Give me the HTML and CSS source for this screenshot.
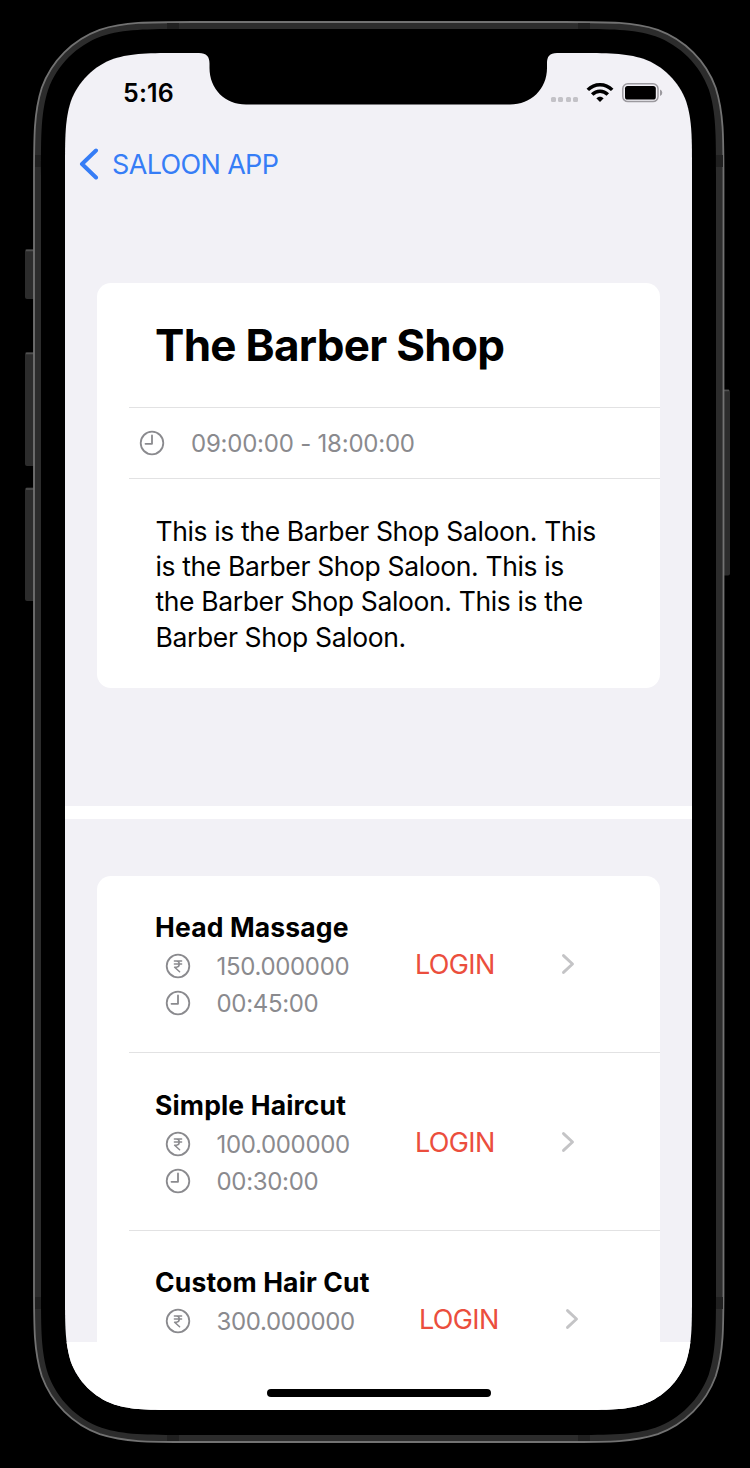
FILE: index.html
```html
<!DOCTYPE html>
<html lang="en">
<head>
<meta charset="utf-8">
<title>Saloon App</title>
<link rel="stylesheet" href="styles.css">
</head>
<body>
<svg width="0" height="0" class="defs">
  <symbol id="clock" viewBox="0 0 26 26"><g fill="none" stroke="#8a8a8e" stroke-width="1.8" stroke-linecap="round" stroke-linejoin="round"><circle cx="13" cy="13" r="11.3"/><path d="M13 5.5V13.8H6.5"/></g></symbol>
  <symbol id="rupee" viewBox="0 0 26 26"><g fill="none" stroke="#8a8a8e" stroke-linecap="round" stroke-linejoin="round"><circle cx="13" cy="13" r="11.3" stroke-width="1.8"/><path stroke-width="1.5" d="M9.4 8H16.6M9.4 11.1H16.6M9.6 8H11.4C15.2 8 15.2 14.2 11.4 14.2H9.6L14.6 18.8"/></g></symbol>
  <symbol id="chevron" viewBox="0 0 14 22"><path d="M2.5 2.6L11.5 11L2.5 19.4" fill="none" stroke="#c4c4c6" stroke-width="2.9" stroke-linecap="round" stroke-linejoin="round"/></symbol>
</svg>
<div class="stage">
  <svg class="device" width="750" height="1468" viewBox="0 0 750 1468">
    <g fill="#2c2c2c">
      <rect x="25" y="249" width="12" height="50" rx="2"/>
      <rect x="25" y="352" width="12" height="114" rx="2"/>
      <rect x="25" y="487.5" width="12" height="113.5" rx="2"/>
      <rect x="720" y="389.5" width="10" height="186" rx="2"/>
    </g>
    <path d="M26 250.5H34M26 353.5H34M26 489H34M724 390.5H729" stroke="#505050" stroke-width="1.5"/>
    <path transform="translate(34 22)" fill="#2c2c2c" stroke="#727272" stroke-width="1.8" d="M0 159c0-45.8 0-68.7 7.8-93.3c9.8-26.9 31-48.1 57.9-57.9c24.6-7.8 47.5-7.8 93.3-7.8H530.5c45.8 0 68.7 0 93.3 7.8c26.9 9.8 48.1 31 57.9 57.9c7.8 24.6 7.8 47.5 7.8 93.3V1261c0 45.8 0 68.7-7.8 93.3c-9.8 26.9-31 48.1-57.9 57.9c-24.6 7.8-47.5 7.8-93.3 7.8H159c-45.8 0-68.7 0-93.3-7.8c-26.9-9.8-48.1-31-57.9-57.9c-7.8-24.6-7.8-47.5-7.8-93.3Z"/>
    <path fill="#202020" d="M167 23h12v7h-12zM578 23h12v7h-12zM167 1434h12v7h-12zM578 1434h12v7h-12zM35 155h7v12h-7zM716 155h7v12h-7zM35 1297h7v12h-7zM716 1297h7v12h-7z"/>
    <path transform="translate(41 29)" fill="#000" d="M0 146.8c0-42.3 0-63.4 7.2-86.2c9-24.8 28.6-44.4 53.4-53.4c22.8-7.2 43.9-7.2 86.2-7.2H528.2c42.3 0 63.4 0 86.2 7.2c24.8 9 44.4 28.6 53.4 53.4c7.2 22.8 7.2 43.9 7.2 86.2V1259.2c0 42.3 0 63.4-7.2 86.2c-9 24.8-28.6 44.4-53.4 53.4c-22.8 7.2-43.9 7.2-86.2 7.2H146.8c-42.3 0-63.4 0-86.2-7.2c-24.8-9-44.4-28.6-53.4-53.4c-7.2-22.8-7.2-43.9-7.2-86.2Z"/>
  </svg>
  <main class="screen">
    <header class="status">
      <span class="time">5:16</span>
      <div class="indicators">
        <span class="dots"><i></i><i></i><i></i><i></i></span>
        <svg width="28" height="22" viewBox="0 0 28 22"><g fill="none" stroke="#000" stroke-width="3.5"><path d="M1.8 7.9C8.5 0.9 19.5 0.9 26.2 7.9"/><path d="M6.2 12.5C10.5 8.1 17.5 8.1 21.8 12.5"/></g><path d="M10.3 16.3C12.3 14.2 15.7 14.2 17.7 16.3L14 20Z"/></svg>
        <svg class="battery" width="41" height="20" viewBox="0 0 41 20"><rect x="0.8" y="0.8" width="35.2" height="17.8" rx="5" fill="none" stroke="#9c9a9f" stroke-width="1.5"/><rect x="3" y="3" width="30.8" height="13.5" rx="2.6"/><path d="M38 6.5Q40.3 7.4 40.3 9.7T38 12.9Z" fill="#9c9a9f"/></svg>
      </div>
    </header>
    <svg class="notch" width="358" height="53" viewBox="0 0 358 53"><path d="M0 0C7.5 0 10.5 3.5 10.5 10.5V15C10.5 36 26 51.5 47 51.5H311C332 51.5 348 36 348 15V10.5C348 3.5 350.5 0 358 0Z"/></svg>
    <nav class="nav">
      <svg width="20" height="32" viewBox="0 0 20 32"><path d="M17 2.5L3 16L17 29.5" fill="none" stroke="#367df6" stroke-width="4" stroke-linecap="round" stroke-linejoin="round"/></svg>
      <span class="back">SALOON APP</span>
    </nav>
    <section class="card info">
      <h1 class="title">The Barber Shop</h1>
      <div class="hours"><svg width="26" height="26"><use href="#clock"/></svg><span class="meta">09:00:00 - 18:00:00</span></div>
      <p class="about">This is the Barber Shop Saloon. This<br>is the Barber Shop Saloon. This is<br>the Barber Shop Saloon. This is the<br>Barber Shop Saloon.</p>
    </section>
    <section class="services">
      <div class="card list">
        <article class="item">
          <div class="details"><h2 class="name">Head Massage</h2>
            <div class="line"><svg width="26" height="26"><use href="#rupee"/></svg><span class="meta">150.000000</span></div>
            <div class="line"><svg width="26" height="26"><use href="#clock"/></svg><span class="meta">00:45:00</span></div></div>
          <span class="login">LOGIN</span><svg class="chevron" width="14" height="22"><use href="#chevron"/></svg>
        </article>
        <article class="item">
          <div class="details"><h2 class="name">Simple Haircut</h2>
            <div class="line"><svg width="26" height="26"><use href="#rupee"/></svg><span class="meta">100.000000</span></div>
            <div class="line"><svg width="26" height="26"><use href="#clock"/></svg><span class="meta">00:30:00</span></div></div>
          <span class="login">LOGIN</span><svg class="chevron" width="14" height="22"><use href="#chevron"/></svg>
        </article>
        <article class="item wide">
          <div class="details"><h2 class="name">Custom Hair Cut</h2>
            <div class="line"><svg width="26" height="26"><use href="#rupee"/></svg><span class="meta">300.000000</span></div></div>
          <span class="login">LOGIN</span><svg class="chevron" width="14" height="22"><use href="#chevron"/></svg>
        </article>
      </div>
    </section>
    <footer class="home"><span class="home-bar"></span></footer>
  </main>
</div>
</body>
</html>
```
FILE: styles.css
```css
* { box-sizing: border-box; margin: 0; padding: 0; }
body { background: #000; font-family: Inter, "Liberation Sans", sans-serif; color: #000; }
svg { display: block; flex: none; }
.defs { position: absolute; }
.stage { position: relative; width: 750px; height: 1468px; padding: 53px 58px 58px 65px; overflow: hidden; }
.device { position: absolute; left: 0; top: 0; }
.screen {
  position: relative; width: 627px; height: 1357px; background: #f2f1f6;
  display: flex; flex-direction: column;
  clip-path: path("M0 117.7c0-33.9 0-50.8 5.8-69.1c7.2-19.9 22.9-35.6 42.8-42.8c18.3-5.8 35.2-5.8 69.1-5.8H509.3c33.9 0 50.8 0 69.1 5.8c19.9 7.2 35.6 22.9 42.8 42.8c5.8 18.3 5.8 35.2 5.8 69.1V1239.3c0 33.9 0 50.8-5.8 69.1c-7.2 19.9-22.9 35.6-42.8 42.8c-18.3 5.8-35.2 5.8-69.1 5.8H117.7c-33.9 0-50.8 0-69.1-5.8c-19.9-7.2-35.6-22.9-42.8-42.8c-5.8-18.3-5.8-35.2-5.8-69.1Z");
}
.notch { position: absolute; left: 134px; top: 0; }
.status { height: 80px; padding: 0 29px 0 58px; display: flex; justify-content: space-between; align-items: center; }
.time { font-size: 25px; font-weight: 600; line-height: 30px; letter-spacing: 0.2px; }
.indicators { display: flex; align-items: center; }
.dots { display: flex; gap: 2.5px; margin: 13px 8px 0 0; }
.dots i { width: 5px; height: 5px; border-radius: 1.5px; background: #c3c2c7; }
.battery { margin-left: 8px; }
.nav { height: 62px; padding-left: 14px; display: flex; align-items: center; gap: 13px; }
.nav svg { margin-top: -1px; }
.back { font-size: 27px; line-height: 32px; color: #367df6; letter-spacing: -0.65px; padding-top: 2px; }
.card { background: #fff; margin: 0 32px; width: 563px; }
.info { margin-top: 88px; height: 405px; border-radius: 14px; }
.title { height: 124px; padding-left: 58px; font-size: 44px; font-weight: 700; line-height: 125px; letter-spacing: -0.7px; white-space: nowrap; }
.hours { margin-left: 32px; height: 72px; border: solid #e2e2e3; border-width: 1px 0; padding-left: 10px; display: flex; align-items: center; gap: 26px; }
.meta { font-size: 24px; line-height: 30px; color: #8a8a8e; letter-spacing: -0.22px; white-space: nowrap; padding-top: 2px; }
.line .meta { letter-spacing: -0.32px; }
.about { padding: 34.5px 0 0 58.5px; font-size: 26.5px; line-height: 35.4px; letter-spacing: -0.37px; white-space: nowrap; }
.services { margin-top: 118px; height: 536px; flex: none; border-top: 13px solid #fff; padding-top: 57px; overflow: hidden; }
.list { border-radius: 14px 14px 0 0; height: 500px; }
.item { height: 177.5px; display: flex; padding: 33px 0 0 58px; position: relative; }
.item + .item::before { content: ""; position: absolute; left: 32px; right: 0; top: -1.5px; height: 1px; background: #e2e2e3; }
.details { width: 260px; }
.name { font-size: 26.5px; font-weight: 700; line-height: 37px; height: 38.5px; letter-spacing: 0.15px; white-space: nowrap; }
.line { height: 37px; padding-left: 10px; display: flex; align-items: center; gap: 25.5px; }
.login { width: 146px; margin-top: 40px; font-size: 27px; line-height: 32px; color: #eb4e3d; letter-spacing: -0.65px; }
.chevron { margin-top: 44px; }
.wide .details { width: 264px; }
.home { flex: 1; background: #fff; display: flex; justify-content: center; align-items: flex-end; padding-bottom: 13px; }
.home-bar { width: 224px; height: 8px; border-radius: 4px; background: #000; }
```
